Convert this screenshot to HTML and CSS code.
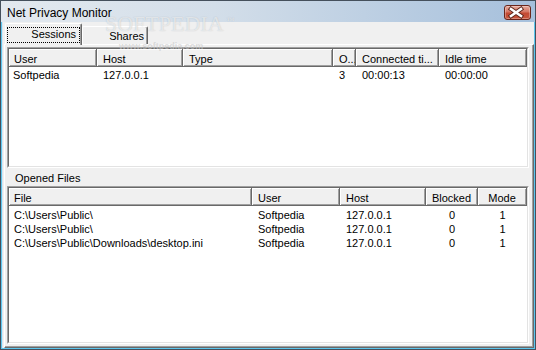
FILE: index.html
```html
<!DOCTYPE html>
<html lang="en">
<head>
    <meta charset="UTF-8">
    <title>Net Privacy Monitor</title>
    <link rel="stylesheet" href="styles.css">
</head>
<body>
    <div class="window">
        <div class="titlebar">
            <span class="title">Net Privacy Monitor</span>
            <div class="close">
                <svg width="25" height="13" viewBox="0 0 25 13">
                    <path d="M6 3 L16 10 M16 3 L6 10" stroke="#5b2419" stroke-width="4.4" stroke-linecap="square"/>
                    <path d="M6 3 L16 10 M16 3 L6 10" stroke="#fff" stroke-width="2.6" stroke-linecap="square"/>
                </svg>
            </div>
        </div>

        <div class="frame">
            <div class="client">
                <div class="tabs">
                    <div class="tab active"><span class="focus">Sessions</span></div>
                    <div class="tab"><span class="tab-text">Shares</span></div>
                </div>

                <div class="page">
                    <!-- sessions list -->
                    <div class="list sessions">
                        <div class="list-in">
                            <div class="hd">
                                <div>User</div>
                                <div>Host</div>
                                <div>Type</div>
                                <div>O...</div>
                                <div>Connected ti...</div>
                                <div>Idle time</div>
                            </div>
                            <div class="rows">
                                <div class="row">
                                    <span>Softpedia</span>
                                    <span>127.0.0.1</span>
                                    <span></span>
                                    <span>3</span>
                                    <span>00:00:13</span>
                                    <span>00:00:00</span>
                                </div>
                            </div>
                        </div>
                    </div>

                    <div class="label">Opened Files</div>

                    <!-- opened files list -->
                    <div class="list files">
                        <div class="list-in">
                            <div class="hd">
                                <div>File</div>
                                <div>User</div>
                                <div>Host</div>
                                <div class="c">Blocked</div>
                                <div class="c">Mode</div>
                            </div>
                            <div class="rows">
                                <div class="row">
                                    <span>C:\Users\Public\</span>
                                    <span>Softpedia</span>
                                    <span>127.0.0.1</span>
                                    <span class="c">0</span>
                                    <span class="c">1</span>
                                </div>
                                <div class="row">
                                    <span>C:\Users\Public\</span>
                                    <span>Softpedia</span>
                                    <span>127.0.0.1</span>
                                    <span class="c">0</span>
                                    <span class="c">1</span>
                                </div>
                                <div class="row">
                                    <span>C:\Users\Public\Downloads\desktop.ini</span>
                                    <span>Softpedia</span>
                                    <span>127.0.0.1</span>
                                    <span class="c">0</span>
                                    <span class="c">1</span>
                                </div>
                            </div>
                        </div>
                    </div>
                </div>
            </div>
        </div>

        <div class="wm-big">SOFTPEDIA<sup>™</sup></div>
        <div class="wm-small">www.softpedia.com</div>
    </div>
</body>
</html>
```

FILE: styles.css
```css
body {
    margin: 0;
    background: #fff;
    font-family: "Liberation Sans", Arial, sans-serif;
    font-size: 11px;
    color: #000;
}
.window {
    position: relative;
    width: 536px;
    height: 350px;
    box-sizing: border-box;
    border: 1px solid #45505c;
    display: flex;
    flex-direction: column;
    background: #d9e5f1;
}
.titlebar {
    height: 21px;
    flex: none;
    display: flex;
    justify-content: space-between;
    align-items: flex-start;
    padding: 0 4px 0 6px;
    background: linear-gradient(to right, #e3e9ef 0%, #d3dee9 40%, #a6c0dc 100%);
}
.title {
    margin-top: 5px;
    font-size: 12px;
    line-height: 14px;
}
.close {
    margin-top: 4px;
    width: 27px;
    height: 15px;
    box-sizing: border-box;
    border: 1px solid #6a261b;
    border-radius: 3px;
    background: linear-gradient(to bottom, #e6ab9d 0%, #d57663 45%, #c34a33 55%, #c8563d 100%);
    box-shadow: inset 0 0 0 1px rgba(255, 255, 255, 0.3);
}
.close svg {
    display: block;
}
.frame {
    flex: 1;
    display: flex;
    border: 0 solid #5cc6ee;
    border-width: 0 1px 1px 1px;
    padding-left: 1px;
}
.client {
    flex: 1;
    display: flex;
    flex-direction: column;
    background: #f0f0f0;
}
.tabs {
    height: 22px;
    flex: none;
    box-sizing: border-box;
    display: flex;
    align-items: flex-end;
    padding: 1px 0 0 2px;
}
.tab {
    width: 66px;
    height: 18px;
    box-sizing: border-box;
    border: 1px solid #696969;
    border-color: #fff #696969 #fff #fff;
    border-bottom: none;
    border-radius: 2px 2px 0 0;
    box-shadow: inset -1px 0 #a0a0a0;
    text-align: right;
    padding: 3px 3px 0 0;
}
.tab-text {
    display: block;
    line-height: 12px;
}
.tab.active {
    position: relative;
    z-index: 1;
    width: 77px;
    height: 22px;
    margin-bottom: -1px;
    padding: 0;
    background: #f0f0f0;
}
.focus {
    display: block;
    height: 16px;
    box-sizing: border-box;
    margin: 3px 1px 0 1px;
    border: 1px dotted #000;
    padding: 0 3px 2px 0;
    line-height: 12px;
}
.page {
    flex: 1;
    display: flex;
    flex-direction: column;
    margin-left: 1px;
    padding: 2px 4px 3px 2px;
    border: 1px solid;
    border-color: #fff #696969 #696969 #fff;
    box-shadow: inset -1px -1px #a0a0a0;
}
.list {
    width: 522px;
    box-sizing: border-box;
    border: 1px solid;
    border-color: #a0a0a0 #fff #fff #a0a0a0;
    background: #fff;
    display: flex;
}
.list-in {
    flex: 1;
    border: 1px solid;
    border-color: #696969 #e3e3e3 #e3e3e3 #696969;
}
.sessions {
    height: 121px;
    flex: none;
}
.files {
    flex: 1;
}
.hd,
.row {
    display: grid;
}
.sessions .hd,
.sessions .row {
    grid-template-columns: 88px 86px 150px 23px 83px 88px;
}
.files .hd,
.files .row {
    grid-template-columns: 243px 88px 86px 52px 49px;
}
.hd div {
    height: 18px;
    box-sizing: border-box;
    padding: 2px 0 0 6px;
    line-height: 16px;
    background: #f0f0f0;
    border-right: 1px solid #696969;
    border-bottom: 1px solid #696969;
    box-shadow: inset 1px 1px #fff, inset -1px -1px #a0a0a0;
    white-space: nowrap;
    overflow: hidden;
}
.hd div:first-child {
    padding-left: 5px;
}
.rows {
    padding-top: 1px;
}
.files .rows {
    padding-top: 2px;
}
.row span {
    height: 14px;
    line-height: 14px;
    padding-left: 6px;
    white-space: nowrap;
    overflow: hidden;
}
.row span:first-child {
    padding-left: 4px;
}
.files .row span:first-child {
    padding-left: 5px;
}
.hd .c,
.row .c {
    text-align: center;
    padding-left: 0;
}
.label {
    height: 18px;
    flex: none;
    box-sizing: border-box;
    padding: 3px 0 0 8px;
    line-height: 14px;
}
.wm-big {
    position: absolute;
    left: 104px;
    top: 16px;
    font-family: "Liberation Serif", "Times New Roman", serif;
    font-size: 22px;
    line-height: 13px;
    color: rgba(255, 255, 255, 0.6);
    text-shadow: 0 0 1px rgba(120, 130, 140, 0.45);
    pointer-events: none;
}
.wm-big sup {
    font-size: 8px;
    line-height: 8px;
    vertical-align: top;
    margin-left: 3px;
}
.wm-small {
    position: absolute;
    left: 118px;
    top: 42px;
    font-size: 9px;
    line-height: 7px;
    font-weight: bold;
    color: rgba(200, 200, 200, 0.6);
    pointer-events: none;
}
```
